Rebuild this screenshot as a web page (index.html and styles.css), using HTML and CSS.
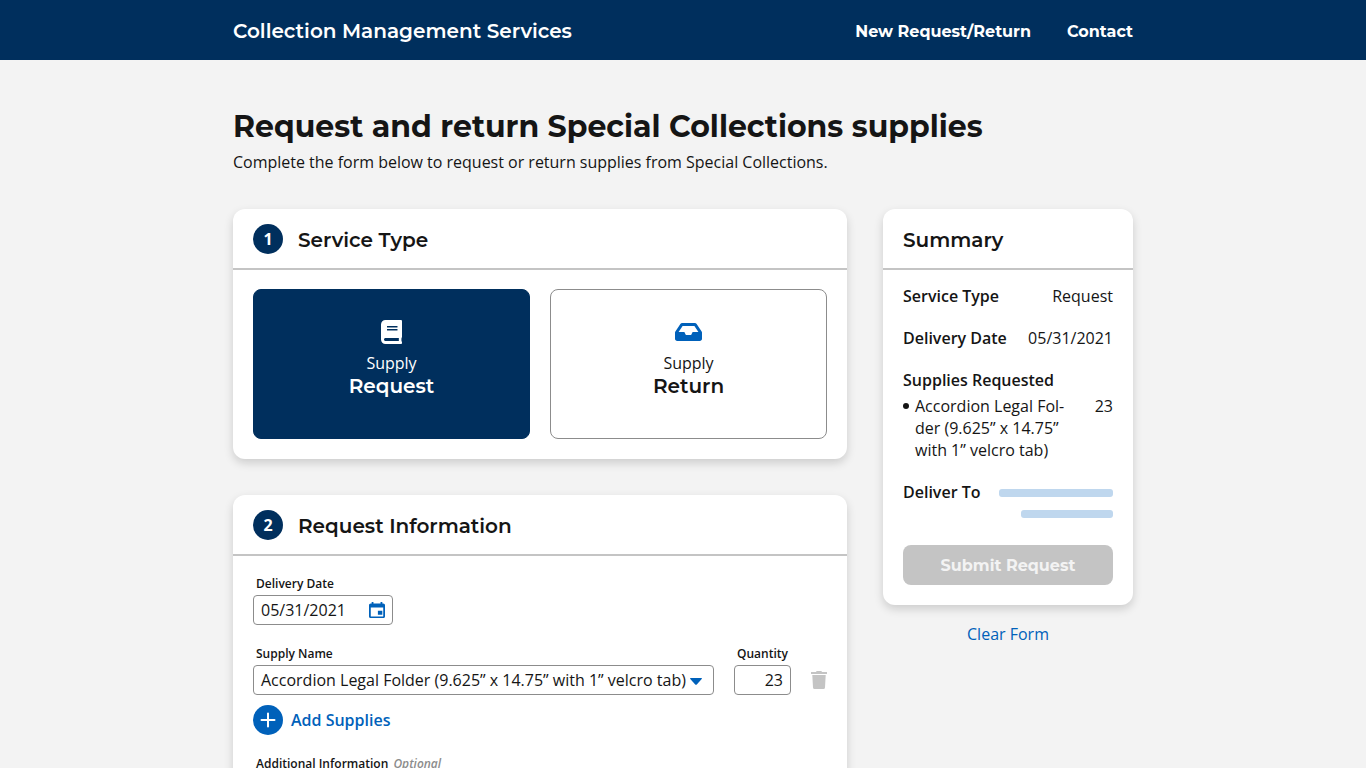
FILE: index.html
```html
<!DOCTYPE html>
<html lang="en">
<head>
<meta charset="utf-8">
<title>Collection Management Services</title>
<link rel="stylesheet" href="styles.css">
</head>
<body>
<header class="topbar">
  <div class="container topbar-inner">
    <a class="brand">Collection Management Services</a>
    <nav class="nav"><a>New Request/Return</a><a>Contact</a></nav>
  </div>
</header>
<div class="container page">
  <h1 class="title">Request and return Special Collections supplies</h1>
  <p class="intro">Complete the form below to request or return supplies from Special Collections.</p>
  <div class="columns">
    <main class="main">
      <section class="card">
        <div class="card-head"><span class="step">1</span><h2>Service Type</h2></div>
        <div class="types">
          <button class="type type-active">
            <svg class="type-icon" width="21" height="24" viewBox="0 0 448 512"><path fill="currentColor" d="M448 360V24c0-13.3-10.7-24-24-24H96C43 0 0 43 0 96v320c0 53 43 96 96 96h328c13.3 0 24-10.700 24-24v-16c0-7.500-3.500-14.300-8.900-18.700-4.200-15.400-4.200-59.300 0-74.700 5.400-4.300 8.900-11.100 8.900-18.600zM128 134c0-3.300 2.700-6 6-6h212c3.300 0 6 2.700 6 6v20c0 3.300-2.700 6-6 6H134c-3.300 0-6-2.700-6-6v-20zm0 64c0-3.300 2.700-6 6-6h212c3.300 0 6 2.700 6 6v20c0 3.300-2.700 6-6 6H134c-3.300 0-6-2.700-6-6v-20zm253.400 250H96c-17.700 0-32-14.300-32-32 0-17.600 14.400-32 32-32h285.400c-1.900 17.100-1.900 46.900 0 64z"/></svg>
            <span>Supply</span><strong>Request</strong>
          </button>
          <button class="type">
            <svg class="type-icon" width="27" height="24" viewBox="0 0 576 512"><path fill="currentColor" d="M567.938 243.908L462.250 85.374A48.003 48.003 0 0 0 422.311 64H153.689a48 48 0 0 0-39.938 21.374L8.062 243.908A47.994 47.994 0 0 0 0 270.533V400c0 26.510 21.490 48 48 48h480c26.510 0 48-21.490 48-48V270.533a47.994 47.994 0 0 0-8.062-26.625zM162.252 128h251.497l85.333 128H376l-32 64H232l-32-64H76.918l85.334-128z"/></svg>
            <span>Supply</span><strong>Return</strong>
          </button>
        </div>
      </section>
      <section class="card">
        <div class="card-head"><span class="step">2</span><h2>Request Information</h2></div>
        <div class="form">
          <div class="field field-date">
            <label>Delivery Date</label>
            <div class="input"><span>05/31/2021</span>
              <svg class="calendar" width="16" height="16" viewBox="3 1 18 20" preserveAspectRatio="none"><path fill="currentColor" d="M18 12h-5v5h5v-5zM16 1v2H8V1H6v2H5c-1.110 0-1.990.9-1.990 2L3 19c0 1.100.890 2 2 2h14c1.100 0 2-.9 2-2V5c0-1.100-.9-2-2-2h-1V1h-2zm3 18H5V8h14v11z"/></svg>
            </div>
          </div>
          <div class="supply-row">
            <div class="field field-name">
              <label>Supply Name</label>
              <div class="input"><span>Accordion Legal Folder (9.625” x 14.75” with 1” velcro tab)</span>
                <svg class="caret" width="12" height="7" viewBox="0 0 12 7"><path fill="currentColor" d="M.6 0h10.800q.9.200.3 1L6.800 6.500q-.8.700-1.600 0L.3 1Q-.3.200.6 0z"/></svg>
              </div>
            </div>
            <div class="field field-qty">
              <label>Quantity</label>
              <div class="input">23</div>
            </div>
            <svg class="trash" width="16" height="18" viewBox="0 0 16 18"><path fill="currentColor" d="M0 1h5q.3-1 1-1h4q.7 0 1 1h5v2H0zM1.300 4h13.400L14 16.500Q13.900 18 12.400 18H3.600Q2.100 18 2 16.500z"/></svg>
          </div>
          <a class="add"><svg width="30" height="30" viewBox="0 0 30 30"><circle cx="15" cy="15" r="15" fill="currentColor"/><path d="M15 8.500v13M8.500 15h13" stroke="#fff" stroke-width="2" stroke-linecap="round"/></svg>Add Supplies</a>
          <div class="field notes">
            <label>Additional Information <em>Optional</em></label>
            <div class="input textarea"></div>
          </div>
        </div>
      </section>
    </main>
    <aside class="side">
      <section class="card">
        <div class="card-head"><h2>Summary</h2></div>
        <div class="summary">
          <div class="row"><b>Service Type</b><span>Request</span></div>
          <div class="row"><b>Delivery Date</b><span>05/31/2021</span></div>
          <b>Supplies Requested</b>
          <div class="item"><i class="bullet"></i><span class="item-name">Accordion Legal Fol-<br>der (9.625” x 14.75”<br>with 1” velcro tab)</span><span>23</span></div>
          <div class="deliver"><b>Deliver To</b><div class="bars"><i class="bar bar-long"></i><i class="bar bar-short"></i></div></div>
          <button class="submit">Submit Request</button>
        </div>
      </section>
      <a class="clear">Clear Form</a>
    </aside>
  </div>
</div>
</body>
</html>
```
FILE: styles.css
```css
* { box-sizing: border-box; }
html { overflow: hidden; }
body {
  margin: 0;
  height: 768px;
  overflow: hidden;
  background: #f3f3f3;
  color: #151515;
  font: 16px/22px "Open Sans", sans-serif;
}
b { font-weight: 600; }
.container { width: 900px; margin: 0 auto; }
.topbar { background: #002f5d; color: #fff; font-family: Montserrat, sans-serif; }
.topbar-inner { height: 60px; display: flex; align-items: center; justify-content: space-between; padding-top: 2px; }
.brand { font-size: 20px; font-weight: 600; }
.nav { display: flex; gap: 36px; padding-top: 2px; font-weight: 700; }
.page { padding-top: 48px; }
.title { margin: 0; font: 700 30px/37px Montserrat, sans-serif; }
.intro { margin: 6px 0 36px; letter-spacing: -.01px; }
.columns { display: flex; gap: 36px; align-items: flex-start; }
.main { width: 614px; display: flex; flex-direction: column; gap: 36px; }
.side { width: 250px; display: flex; flex-direction: column; }
.card { background: #fff; border-radius: 12px; box-shadow: 0 4px 10px rgba(0, 0, 0, .16); }
.card-head { height: 61px; padding: 0 20px; display: flex; align-items: center; gap: 15px; border-bottom: 2px solid #c4c4c4; }
.card-head h2 { margin: 3px 0 0; font: 600 20px/24px Montserrat, sans-serif; }
.step { width: 30px; height: 30px; border-radius: 50%; background: #002f5d; color: #fff; font-weight: 700; line-height: 30px; text-align: center; }
.types { display: grid; grid-template-columns: 1fr 1fr; gap: 20px; padding: 19px 20px 20px; }
.type { height: 150px; padding: 0 0 11px; display: flex; flex-direction: column; align-items: center; justify-content: center; border: 1px solid #8c8c8c; border-radius: 8px; background: #fff; color: #151515; font: inherit; }
.type strong { font: 600 20px/24px Montserrat, sans-serif; }
.type-icon { color: #0061ba; margin-bottom: 8px; }
.type-active { background: #002f5d; border-color: #002f5d; color: #fff; }
.type-active .type-icon { color: #fff; }
.form { padding: 20px 20px 30px; }
.field label { display: block; padding-left: 3px; font-size: 12px; line-height: 16px; font-weight: 600; margin-bottom: 3px; }
.field em { color: #8c8c8c; margin-left: 2px; }
.input { height: 30px; border: 1px solid #8c8c8c; border-radius: 4px; padding: 0 7px; display: flex; align-items: center; white-space: nowrap; }
.field-date { width: 140px; }
.calendar { color: #0061ba; margin-left: auto; }
.supply-row { display: flex; align-items: flex-end; margin-top: 21px; }
.field-name { width: 461px; margin-right: 20px; }
.field-qty { width: 57px; margin-right: 20px; }
.field-qty .input { justify-content: flex-end; }
.caret { color: #0061ba; margin-left: 4px; margin-top: 2px; }
.trash { color: #c4c4c4; margin-bottom: 6px; }
.add { display: flex; align-items: center; gap: 8px; margin-top: 10px; color: #0061ba; font-weight: 600; }
.notes { margin-top: 21px; }
.textarea { height: 90px; }
.summary { padding: 15px 20px 20px; }
.row { display: flex; justify-content: space-between; margin-bottom: 20px; }
.item { display: flex; margin-top: 4px; }
.item-name { flex: 1; }
.bullet { width: 6px; height: 6px; margin: 8px 6px 0 0; border-radius: 50%; background: #151515; }
.deliver { display: flex; justify-content: space-between; margin-top: 20px; }
.bars { display: flex; flex-direction: column; align-items: flex-end; gap: 13px; padding-top: 8px; }
.bar { height: 8px; border-radius: 3px; background: #bfd7ee; }
.bar-long { width: 114px; }
.bar-short { width: 92px; }
.submit { display: block; width: 100%; height: 40px; margin-top: 27px; padding: 1px 0 0; border: 0; border-radius: 8px; background: #c4c4c4; color: #f3f3f3; font: 700 16px/39px Montserrat, sans-serif; }
.clear { align-self: center; margin-top: 18px; color: #0061ba; }
```
